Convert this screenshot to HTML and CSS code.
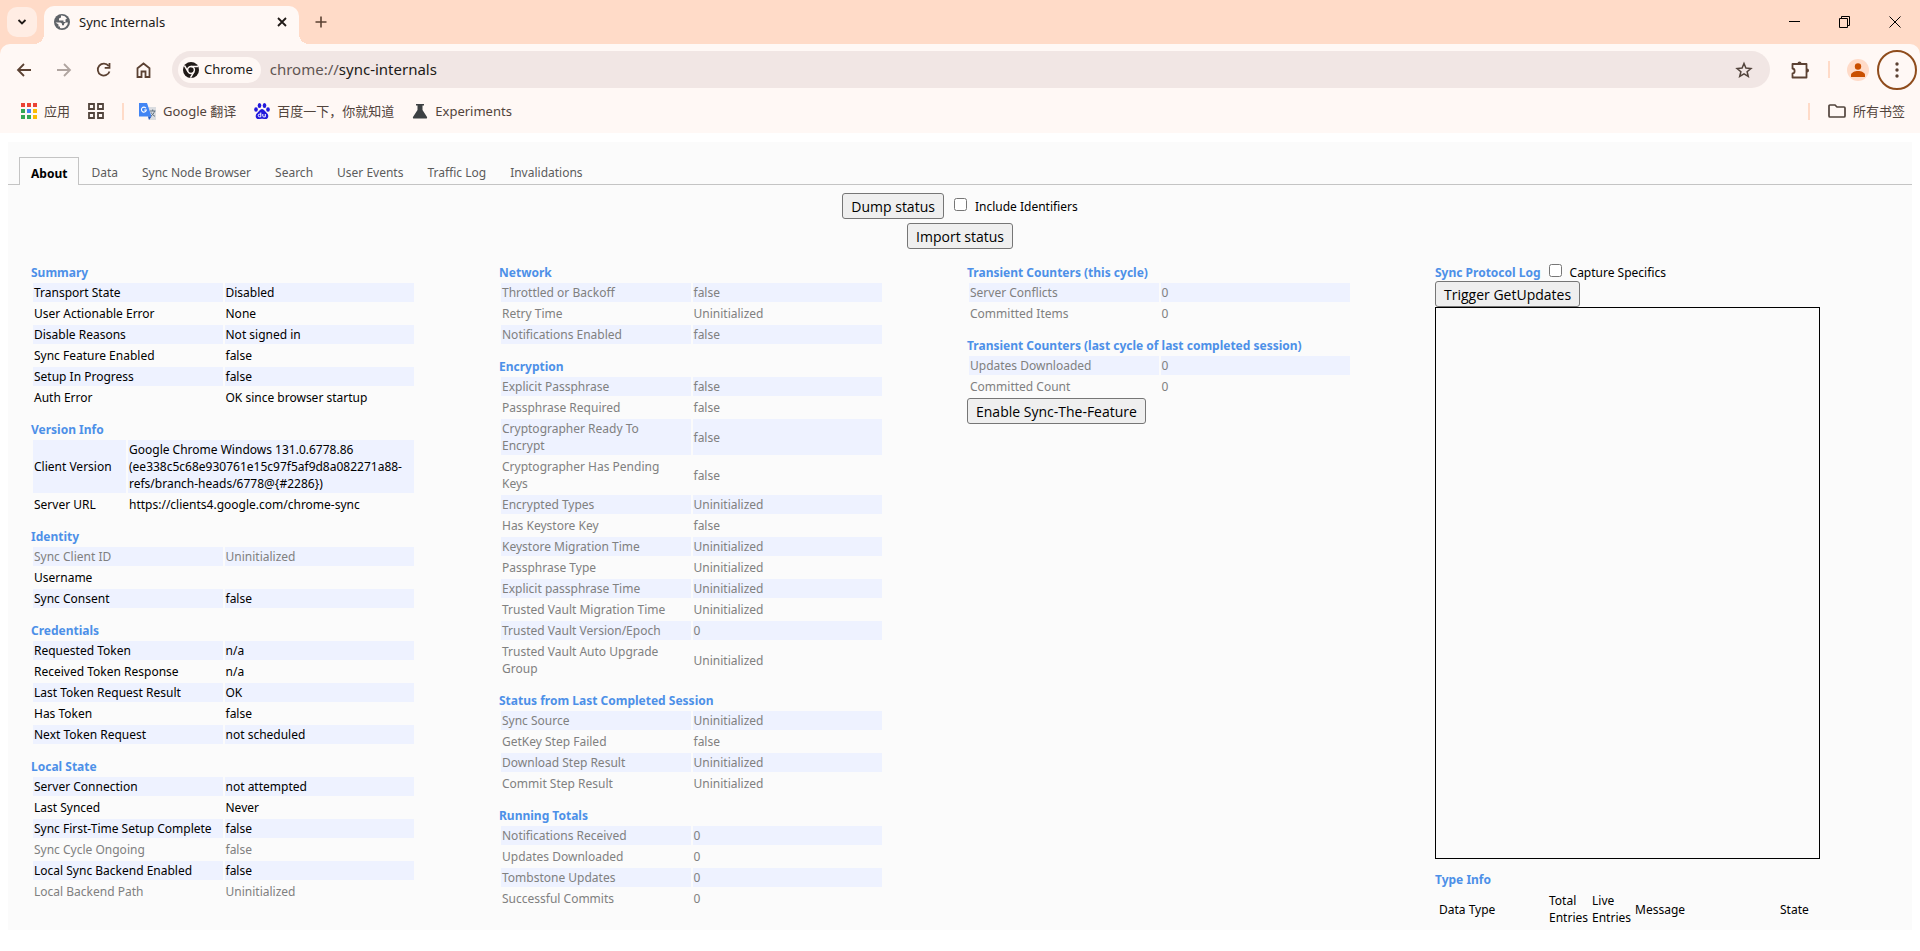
FILE: index.html
```html
<!DOCTYPE html>
<html lang="zh-CN">
<head>
<meta charset="utf-8">
<title>Sync Internals</title>
<link rel="stylesheet" href="styles.css">
</head>
<body>
<header class="browser">
  <div class="tabstrip">
    <button class="tab-search" aria-label="Search tabs"><svg width="10" height="10" viewBox="0 0 10 10"><path d="M1.5 3l3.500 3.500L8.500 3" fill="none" stroke="#201a17" stroke-width="1.800"/></svg></button>
    <div class="browser-tab">
      <svg width="16" height="16" viewBox="0 0 16 16"><circle cx="8" cy="8" r="8" fill="#5f6368"/><path d="M1.500 8.500h4.500c1 0 2 .8 2 1.800v1h2v-1.500l1.500-1.300h2.500a6.300 6.300 0 0 1-8 5.500v-1.500H4.500v-2z M7 1.600v2L5 4.500v2h4.500v1.500h2V5.500L13 4.500A6.300 6.300 0 0 0 7 1.600z" fill="#fff8f5"/></svg>
      <span class="browser-tab-title">Sync Internals</span>
      <button class="icon-button small" aria-label="Close tab"><svg width="10" height="10" viewBox="0 0 10 10"><path d="M1 1l8 8M9 1l-8 8" stroke="#201a17" stroke-width="1.800"/></svg></button>
    </div>
    <button class="icon-button new-tab" aria-label="New tab"><svg width="12" height="12" viewBox="0 0 12 12"><path d="M6 0.500v11M.5 6h11" stroke="#5b4132" stroke-width="1.600"/></svg></button>
    <div class="window-buttons">
      <button aria-label="Minimize"><svg width="12" height="12" viewBox="0 0 12 12"><path d="M0 5.500h11" stroke="#000"/></svg></button>
      <button aria-label="Restore"><svg width="12" height="12" viewBox="0 0 12 12"><path d="M.5 2.500h8v9h-8zM2.500 2.500V.5h8v9h-2" fill="none" stroke="#000"/></svg></button>
      <button aria-label="Close"><svg width="12" height="12" viewBox="0 0 12 12"><path d="M.5.5l11 11M11.500.5l-11 11" stroke="#000"/></svg></button>
    </div>
  </div>
  <div class="toolbar">
    <nav class="nav-buttons">
      <button class="icon-button" aria-label="Back"><svg width="16" height="16" viewBox="0 0 16 16"><path d="M15 8H2M8 2L2 8l6 6" fill="none" stroke="#5b4132" stroke-width="1.800"/></svg></button>
      <button class="icon-button" aria-label="Forward"><svg width="16" height="16" viewBox="0 0 16 16"><path d="M1 8h13M8 2l6 6-6 6" fill="none" stroke="#b0a5a0" stroke-width="1.800"/></svg></button>
      <button class="icon-button" aria-label="Reload"><svg width="16" height="16" viewBox="0 0 16 16"><path d="M12.600 4A6 6 0 1 0 13.500 9.500M13.500 1v4.800H8.700" fill="none" stroke="#5b4132" stroke-width="1.800"/></svg></button>
      <button class="icon-button" aria-label="Home"><svg width="16" height="16" viewBox="0 0 16 16"><path d="M1.500 6.200L7.500 1.500l6 4.700v8.800h-4V9.500h-4V15h-4z" fill="none" stroke="#5b4132" stroke-width="1.800"/></svg></button>
    </nav>
    <div class="omnibox">
      <button class="site-chip"><svg width="16" height="16" viewBox="0 0 16 16"><circle cx="8" cy="8" r="8" fill="#201a17"/><circle cx="8" cy="8" r="3.400" fill="#201a17" stroke="#fff8f5" stroke-width="1.500"/><path d="M8 4.500h7M5 9.700L1.500 3.700M11 9.700L7.500 15.700" stroke="#fff8f5" stroke-width="1.500"/></svg><span>Chrome</span></button>
      <div class="url"><span class="scheme">chrome://</span>sync-internals</div>
      <button class="icon-button" aria-label="Bookmark this tab"><svg width="18" height="18" viewBox="0 0 18 18"><path d="M9 2.500l1.900 4.600 5 .4-3.800 3.200 1.200 4.800L9 12.900l-4.300 2.600 1.200-4.800-3.800-3.200 5-.4z" fill="none" stroke="#52443c" stroke-width="1.500"/></svg></button>
    </div>
    <div class="toolbar-actions">
      <button class="icon-button" aria-label="Extensions"><svg width="20" height="20" viewBox="0 0 20 20"><path d="M2.500 4h14v13.500h-14v-4c2.800-.2 2.800-4.800 0-5z" fill="none" stroke="#5b4132" stroke-width="1.800" stroke-linejoin="round"/><path d="M7.500 3.500a2 2 0 0 1 4 0zM17 8.500a2 2 0 0 1 0 4z" fill="#5b4132"/></svg></button>
      <span class="divider"></span>
      <button class="icon-button profile" aria-label="Profile"><svg width="22" height="22" viewBox="0 0 22 22"><circle cx="11" cy="11" r="11" fill="#ffdbc8"/><circle cx="11" cy="7.500" r="3.200" fill="#c94f00"/><path d="M4 18v-2c0-2.500 4-4 7-4s7 1.500 7 4v2z" fill="#c94f00"/></svg></button>
      <button class="menu-button" aria-label="Menu"><svg width="4" height="16" viewBox="0 0 4 16"><circle cx="2" cy="2" r="1.700" fill="#5b4132"/><circle cx="2" cy="8" r="1.700" fill="#5b4132"/><circle cx="2" cy="14" r="1.700" fill="#5b4132"/></svg></button>
    </div>
  </div>
  <nav class="bookmarks">
    <a class="bookmark" href="#"><svg width="16" height="16" viewBox="0 0 16 16"><path d="M0 0h4v4H0zM6 0h4v4H6zM12 0h4v4h-4z" fill="#ea4335"/><path d="M0 6h4v4H0zM0 12h4v4H0zM6 12h4v4H6z" fill="#34a853"/><path d="M6 6h4v4H6z" fill="#4285f4"/><path d="M12 6h4v4h-4zM12 12h4v4h-4z" fill="#fbbc05"/></svg>应用</a>
    <a class="bookmark" href="#" aria-label="Tab groups"><svg width="16" height="16" viewBox="0 0 16 16"><path d="M1 1h5v5H1zM10 1h5v5h-5zM1 10h5v5H1zM10 10h5v5h-5z" fill="none" stroke="#52443c" stroke-width="1.800"/></svg></a>
    <span class="divider"></span>
    <a class="bookmark" href="#"><svg width="17" height="17" viewBox="0 0 17 17"><path d="M7 4h10v13h-7z" fill="#dadce0"/><path d="M0 0h8l4.500 13.500H0z" fill="#4285f4"/><path d="M9 13.500h3.500L10 17z" fill="#1a56c4"/><path d="M7 5.200A2.500 2.500 0 1 0 7.400 7H5.200" fill="none" stroke="#fff" stroke-width="1.100"/><path d="M11 8h5.500M13.700 6.500V8M15.500 8c-.5 2.500-2 4-3.500 5M12.200 9.500c.8 1.800 2 3 3.800 3.800" fill="none" stroke="#5f7080"/></svg>Google 翻译</a>
    <a class="bookmark" href="#"><svg width="16" height="16" viewBox="0 0 16 16"><g fill="#2319dc"><ellipse cx="5.500" cy="2.500" rx="1.800" ry="2.500"/><ellipse cx="10.500" cy="2.500" rx="1.800" ry="2.500"/><ellipse cx="2" cy="6.500" rx="1.800" ry="2.300"/><ellipse cx="14" cy="6.500" rx="1.800" ry="2.300"/><path d="M8 6c2 0 3 2.500 5 4.200 2.200 2 1.500 5.800-1.500 5.800-1.500 0-2-.3-3.500-.3s-2 .3-3.500.3C1.500 16 .8 12.200 3 10.200 5 8.500 6 6 8 6z"/></g><path d="M6.800 9.500v4.300H5.500a1.300 1.300 0 0 1 0-2.600h1.300M8.800 11v2a1 1 0 0 0 1 .9h1.500V11" fill="none" stroke="#fff"/></svg>百度一下，你就知道</a>
    <a class="bookmark" href="#"><svg width="16" height="16" viewBox="0 0 16 16"><path d="M4 1h8v1.500h-1.500V7l4.500 7c.4 1-.2 1.500-1 1.500H2c-.8 0-1.400-.5-1-1.500l4.500-7V2.500H4z" fill="#3c4043"/></svg>Experiments</a>
    <div class="all-bookmarks">
      <span class="divider"></span>
      <a class="bookmark" href="#"><svg width="18" height="14" viewBox="0 0 18 14"><path d="M1 2.500V12q0 1 1 1h14q1 0 1-1V4q0-1-1-1H9L7 1H2q-1 0-1 1z" fill="none" stroke="#52443c" stroke-width="1.700"/></svg>所有书签</a>
    </div>
  </nav>
</header>
<main class="page">
  <div class="tabs" role="tablist">
    <button class="tab selected" role="tab" aria-selected="true">About</button>
    <button class="tab" role="tab">Data</button>
    <button class="tab" role="tab">Sync Node Browser</button>
    <button class="tab" role="tab">Search</button>
    <button class="tab" role="tab">User Events</button>
    <button class="tab" role="tab">Traffic Log</button>
    <button class="tab" role="tab">Invalidations</button>
  </div>
  <div class="status-controls">
    <div class="control-row"><button class="push">Dump status</button><label class="check"><input type="checkbox">Include Identifiers</label></div>
    <div class="control-row"><button class="push">Import status</button></div>
  </div>
  <div class="columns">
    <div class="column">
      <section><h2>Summary</h2><table class="info">
        <tr><td>Transport State</td><td>Disabled</td></tr>
        <tr><td>User Actionable Error</td><td>None</td></tr>
        <tr><td>Disable Reasons</td><td>Not signed in</td></tr>
        <tr><td>Sync Feature Enabled</td><td>false</td></tr>
        <tr><td>Setup In Progress</td><td>false</td></tr>
        <tr><td>Auth Error</td><td>OK since browser startup</td></tr>
      </table></section>
      <section><h2>Version Info</h2><table class="info version">
        <tr><td>Client Version</td><td>Google Chrome Windows 131.0.6778.86<br>(ee338c5c68e930761e15c97f5af9d8a082271a88-<br>refs/branch-heads/6778@{#2286})</td></tr>
        <tr><td>Server URL</td><td>https://clients4.google.com/chrome-sync</td></tr>
      </table></section>
      <section><h2>Identity</h2><table class="info">
        <tr class="unset"><td>Sync Client ID</td><td>Uninitialized</td></tr>
        <tr><td>Username</td><td></td></tr>
        <tr><td>Sync Consent</td><td>false</td></tr>
      </table></section>
      <section><h2>Credentials</h2><table class="info">
        <tr><td>Requested Token</td><td>n/a</td></tr>
        <tr><td>Received Token Response</td><td>n/a</td></tr>
        <tr><td>Last Token Request Result</td><td>OK</td></tr>
        <tr><td>Has Token</td><td>false</td></tr>
        <tr><td>Next Token Request</td><td>not scheduled</td></tr>
      </table></section>
      <section><h2>Local State</h2><table class="info">
        <tr><td>Server Connection</td><td>not attempted</td></tr>
        <tr><td>Last Synced</td><td>Never</td></tr>
        <tr><td>Sync First-Time Setup Complete</td><td>false</td></tr>
        <tr class="unset"><td>Sync Cycle Ongoing</td><td>false</td></tr>
        <tr><td>Local Sync Backend Enabled</td><td>false</td></tr>
        <tr class="unset"><td>Local Backend Path</td><td>Uninitialized</td></tr>
      </table></section>
    </div>
    <div class="column">
      <section><h2>Network</h2><table class="info unset">
        <tr><td>Throttled or Backoff</td><td>false</td></tr>
        <tr><td>Retry Time</td><td>Uninitialized</td></tr>
        <tr><td>Notifications Enabled</td><td>false</td></tr>
      </table></section>
      <section><h2>Encryption</h2><table class="info unset">
        <tr><td>Explicit Passphrase</td><td>false</td></tr>
        <tr><td>Passphrase Required</td><td>false</td></tr>
        <tr><td>Cryptographer Ready To<br>Encrypt</td><td>false</td></tr>
        <tr><td>Cryptographer Has Pending<br>Keys</td><td>false</td></tr>
        <tr><td>Encrypted Types</td><td>Uninitialized</td></tr>
        <tr><td>Has Keystore Key</td><td>false</td></tr>
        <tr><td>Keystore Migration Time</td><td>Uninitialized</td></tr>
        <tr><td>Passphrase Type</td><td>Uninitialized</td></tr>
        <tr><td>Explicit passphrase Time</td><td>Uninitialized</td></tr>
        <tr><td>Trusted Vault Migration Time</td><td>Uninitialized</td></tr>
        <tr><td>Trusted Vault Version/Epoch</td><td>0</td></tr>
        <tr><td>Trusted Vault Auto Upgrade<br>Group</td><td>Uninitialized</td></tr>
      </table></section>
      <section><h2>Status from Last Completed Session</h2><table class="info unset">
        <tr><td>Sync Source</td><td>Uninitialized</td></tr>
        <tr><td>GetKey Step Failed</td><td>false</td></tr>
        <tr><td>Download Step Result</td><td>Uninitialized</td></tr>
        <tr><td>Commit Step Result</td><td>Uninitialized</td></tr>
      </table></section>
      <section><h2>Running Totals</h2><table class="info unset">
        <tr><td>Notifications Received</td><td>0</td></tr>
        <tr><td>Updates Downloaded</td><td>0</td></tr>
        <tr><td>Tombstone Updates</td><td>0</td></tr>
        <tr><td>Successful Commits</td><td>0</td></tr>
      </table></section>
    </div>
    <div class="column">
      <section><h2>Transient Counters (this cycle)</h2><table class="info unset">
        <tr><td>Server Conflicts</td><td>0</td></tr>
        <tr><td>Committed Items</td><td>0</td></tr>
      </table></section>
      <section><h2>Transient Counters (last cycle of last completed session)</h2><table class="info unset">
        <tr><td>Updates Downloaded</td><td>0</td></tr>
        <tr><td>Committed Count</td><td>0</td></tr>
      </table><button class="push">Enable Sync-The-Feature</button></section>
    </div>
    <div class="column">
      <section>
        <div class="log-heading"><h2>Sync Protocol Log</h2><label class="check"><input type="checkbox">Capture Specifics</label></div>
        <button class="push">Trigger GetUpdates</button>
        <div class="traffic-log"></div>
      </section>
      <section><h2>Type Info</h2><table class="types">
        <tr><th class="type">Data Type</th><th>Total Entries</th><th>Live Entries</th><th class="message">Message</th><th>State</th></tr>
      </table></section>
    </div>
  </div>
</main>
</body>
</html>
```
FILE: styles.css
```css
* { box-sizing: border-box; }
body {
  margin: 0;
  background: #fff;
  color: #000;
  font-family: "Noto Sans", "Noto Sans CJK SC", sans-serif;
  font-size: 12px;
  line-height: 17px;
}
button { font: inherit; color: inherit; border: 0; background: none; padding: 0; }
svg { display: block; flex: none; }

.browser { background: #ffdbc8; }
.tabstrip { display: flex; height: 44px; padding-left: 7px; }
.tab-search {
  width: 30px; height: 30px; margin: 7px 7px 0 0;
  display: grid; place-items: center;
  border-radius: 10px; background: #ffede4;
}
.browser-tab {
  display: flex; align-items: center;
  width: 255px; height: 38px; margin-top: 6px; padding: 0 12px 6px 10px;
  background: #fff8f5; border-radius: 10px 10px 0 0;
  position: relative;
}
.browser-tab::before, .browser-tab::after {
  content: ""; position: absolute; bottom: 0; width: 10px; height: 10px;
}
.browser-tab::before { left: -10px; background: radial-gradient(circle at 0 0, transparent 10px, #fff8f5 10px); }
.browser-tab::after { right: -10px; background: radial-gradient(circle at 100% 0, transparent 10px, #fff8f5 10px); }
.browser-tab-title { flex: 1; margin-left: 9px; color: #201a17; font-size: 13px; }
.icon-button { width: 28px; height: 28px; display: grid; place-items: center; }
.icon-button.small { width: 10px; }
.new-tab { margin: 8px 0 0 8px; }
.window-buttons { margin-left: auto; display: flex; }
.window-buttons button { width: 50px; height: 44px; display: grid; place-items: center; }

.toolbar {
  display: flex; align-items: center; height: 51px; padding: 0 3px 0 10px;
  border-radius: 10px 10px 0 0; background: #fff8f5;
}
.nav-buttons { display: flex; gap: 12px; }
.omnibox {
  flex: 1; display: flex; align-items: center;
  height: 37px; margin-left: 14px; padding: 0 12px 0 6px;
  border-radius: 19px; background: #f1e6e4;
}
.site-chip {
  display: flex; align-items: center; gap: 5px;
  height: 26px; padding: 0 8px 0 5px;
  border-radius: 13px; background: #fff8f5; color: #201a17; font-size: 13px;
}
.url { flex: 1; margin-left: 9px; font-size: 15px; color: #201a17; }
.scheme { color: #5f5552; }
.toolbar-actions { display: flex; align-items: center; margin-left: 16px; }
.divider { width: 2px; height: 17px; background: #ffdbc8; }
.toolbar-actions .divider { margin: 0 14px; }
.menu-button {
  width: 40px; height: 40px; margin-left: 5px;
  display: grid; place-items: center;
  border: 2px solid #8f4c1c; border-radius: 50%;
}

.bookmarks {
  display: flex; align-items: center; gap: 18px;
  height: 38px; padding: 0 15px 6px 21px; background: #fff8f5;
}
.bookmarks > .divider { margin-right: -3px; }
.bookmark { display: flex; align-items: center; gap: 7px; color: #52443c; font-size: 13px; text-decoration: none; }
.all-bookmarks { display: flex; align-items: center; gap: 18px; margin-left: auto; }

.page { margin: 9px 8px 22px; padding: 15px 0 0; background: #fbfbfb; }
.tabs { display: flex; padding-left: 11px; border-bottom: 1px solid #c4c4c4; }
.tab { height: 27px; padding: 3px 11px 0; border: 1px solid transparent; border-bottom: 0; color: #5c5c5c; }
.tab.selected {
  margin-bottom: -1px; height: 28px;
  border-color: #c4c4c4; background: #fbfbfb; color: #000; font-weight: 700;
}
.status-controls { display: grid; gap: 4px; padding-top: 8px; }
.control-row { display: flex; justify-content: center; gap: 10px; }
.push {
  display: block; height: 26px; padding: 0 8px;
  border: 1px solid #767676; border-radius: 3px; background: #efefef;
  font-family: "Open Sans", sans-serif; font-size: 14px; white-space: nowrap;
}
.check { display: flex; align-items: center; gap: 8px; }
.check input { width: 13px; height: 13px; margin: 0 0 4px; }

.columns { display: grid; grid-template-columns: repeat(4, 1fr); gap: 83px; padding: 15px 92px 0 23px; }
.column { display: flex; flex-direction: column; gap: 12px; min-width: 0; }
h2 { margin: 0; font-size: 12px; line-height: 17px; font-weight: 700; color: #4d90e8; white-space: nowrap; }
.info { width: 100%; table-layout: fixed; border-collapse: separate; border-spacing: 2px; }
td { height: 19px; padding: 1px; }
.info tr:nth-child(odd) td { background: #eef2ff; }
.unset { color: #808080; }
.version td:first-child { width: 93px; }
.log-heading { display: flex; align-items: center; gap: 8px; height: 17px; }
.traffic-log { height: 552px; border: 1px solid #000; }
.types { width: 100%; table-layout: fixed; border-spacing: 2px; }
.types th { width: 41px; padding: 2px; font-weight: 400; text-align: left; }
.types .type { width: 108px; }
.types .message { width: 143px; }
```
